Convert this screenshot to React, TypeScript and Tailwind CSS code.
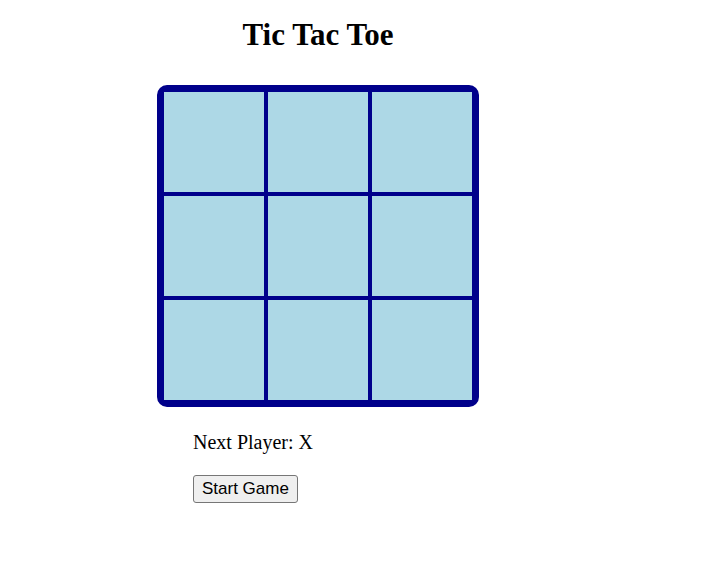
export default function App() {
  const cells = Array.from({ length: 9 }, (_, i) => i);

  return (
    <div className="w-[636px] flex flex-col items-center bg-white text-black">
      <h1 className="mt-4 mb-8 text-[31px] leading-[37px] font-bold font-['Liberation_Serif',serif]">
        Tic Tac Toe
      </h1>
      <div className="grid grid-cols-3 border-[5px] border-[#00008B] rounded-[10px]">
        {cells.map((i) => (
          <div
            key={i}
            className="w-[104px] h-[104px] border-2 border-[#00008B] bg-[#ADD8E6]"
          />
        ))}
      </div>
      <div className="self-start ml-[193px] mt-6 flex flex-col items-start">
        <div className="text-[20px] leading-[23px] font-['Liberation_Serif',serif]">
          Next Player: X
        </div>
        <button className="mt-[21px] h-[28px] px-[8px] text-[17px] leading-[20px] font-['Liberation_Sans',sans-serif] bg-[#efefef] border border-[#767676] rounded-[3px]">
          Start Game
        </button>
      </div>
    </div>
  );
}
